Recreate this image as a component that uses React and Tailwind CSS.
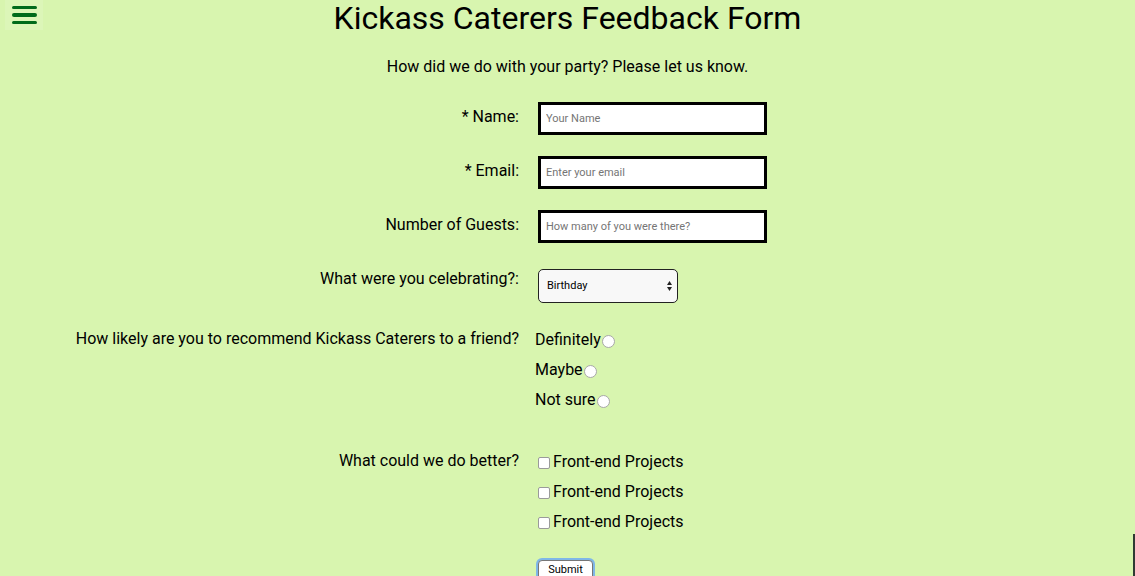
import { useState } from "react";

const FONT = { fontFamily: "Roboto, 'Liberation Sans', sans-serif" };

function TextRow({ label, placeholder, labelTop = "mt-[5px]" }) {
  return (
    <div className="grid grid-cols-[519px_1fr] gap-x-[19px]">
      <label className={`${labelTop} text-right text-[16px] leading-[20px] text-black`}>
        {label}
      </label>
      <input
        type="text"
        placeholder={placeholder}
        className="h-[33px] w-[229px] border-[3px] border-black bg-white px-[5px] text-[11px] text-black outline-none placeholder:text-[#757575]"
      />
    </div>
  );
}

const RADIOS = ["Definitely", "Maybe", "Not sure"];

export default function App() {
  const [choice, setChoice] = useState("");

  return (
    <div className="relative min-h-screen w-full bg-[#d8f5af] pb-10 text-black" style={FONT}>
      {/* Hamburger */}
      <div className="absolute left-[5px] top-0 flex h-[30px] w-[38px] flex-col justify-center gap-[4px] bg-[#dcf6b8] pl-[7px]">
        <span className="block h-[3.5px] w-[25px] rounded-full bg-[#006b1b]" />
        <span className="block h-[3.5px] w-[25px] rounded-full bg-[#006b1b]" />
        <span className="block h-[3.5px] w-[25px] rounded-full bg-[#006b1b]" />
      </div>

      <h1 className="pt-px text-center text-[32px] leading-[34px] font-normal">
        Kickass Caterers Feedback Form
      </h1>
      <p className="mt-[22px] text-center text-[16px] leading-[20px]">
        How did we do with your party? Please let us know.
      </p>

      <form className="mt-[25px] flex flex-col" onSubmit={(e) => e.preventDefault()}>
        <TextRow label="* Name:" placeholder="Your Name" />
        <div className="h-[21px]" />
        <TextRow label="* Email:" placeholder="Enter your email" />
        <div className="h-[21px]" />
        <TextRow label="Number of Guests:" placeholder="How many of you were there?" />

        {/* Select */}
        <div className="mt-[26px] grid grid-cols-[519px_1fr] gap-x-[19px]">
          <label className="mt-0 text-right text-[16px] leading-[20px]">
            What were you celebrating?:
          </label>
          <div className="relative h-[34px] w-[140px]">
            <select
              defaultValue="Birthday"
              className="h-full w-full appearance-none rounded-[5px] border border-[#222] bg-[#f8f8f8] pl-[8px] pt-px text-[11px] text-black outline-none"
            >
              <option>Birthday</option>
              <option>Anniversary</option>
              <option>Wedding</option>
            </select>
            <svg
              className="pointer-events-none absolute right-[6px] top-[12px]"
              width="5"
              height="10"
              viewBox="0 0 5 10"
            >
              <path d="M2.5 0 L5 4 L0 4 Z" fill="#222" />
              <path d="M2.5 10 L5 6 L0 6 Z" fill="#222" />
            </svg>
          </div>
        </div>

        {/* Radios */}
        <div className="mt-[22px] grid grid-cols-[519px_1fr] gap-x-[16px]">
          <label className="mt-[4px] text-right text-[16px] leading-[20px]">
            How likely are you to recommend Kickass Caterers to a friend?
          </label>
          <div className="flex flex-col">
            {RADIOS.map((r) => (
              <label
                key={r}
                className="flex h-[30px] cursor-pointer items-center text-[16px]"
                onClick={() => setChoice(r)}
              >
                <span>{r}</span>
                <span className="ml-px mt-[3px] flex h-[13px] w-[13px] items-center justify-center rounded-full border border-[#a8a8a8] bg-white">
                  {choice === r && <span className="h-[7px] w-[7px] rounded-full bg-[#2a6ad0]" />}
                </span>
              </label>
            ))}
          </div>
        </div>

        {/* Checkboxes */}
        <div className="mt-[32px] grid grid-cols-[519px_1fr] gap-x-[19px]">
          <label className="mt-[4px] text-right text-[16px] leading-[20px]">
            What could we do better?
          </label>
          <div className="flex flex-col">
            {[0, 1, 2].map((i) => (
              <label key={i} className="flex h-[30px] items-center text-[16px]">
                <span className="mr-[3px] mt-[2px] h-[12px] w-[12px] rounded-[2px] border border-[#9a9a9a] bg-white" />
                <span>Front-end Projects</span>
              </label>
            ))}
          </div>
        </div>

        <div className="mt-[19px] grid grid-cols-[519px_1fr] gap-x-[19px]">
          <div />
          <div>
            <button
              type="submit"
              className="h-[20px] w-[55px] rounded-[4px] border border-[#777] bg-white text-[11px] leading-[16px] ring-2 ring-[#7fb7e8]"
            >
              Submit
            </button>
          </div>
        </div>
      </form>

      {/* scrollbar hint */}
      <div className="absolute bottom-0 right-0 top-[534px] w-[2px] bg-[#2f3a33]" />
    </div>
  );
}
